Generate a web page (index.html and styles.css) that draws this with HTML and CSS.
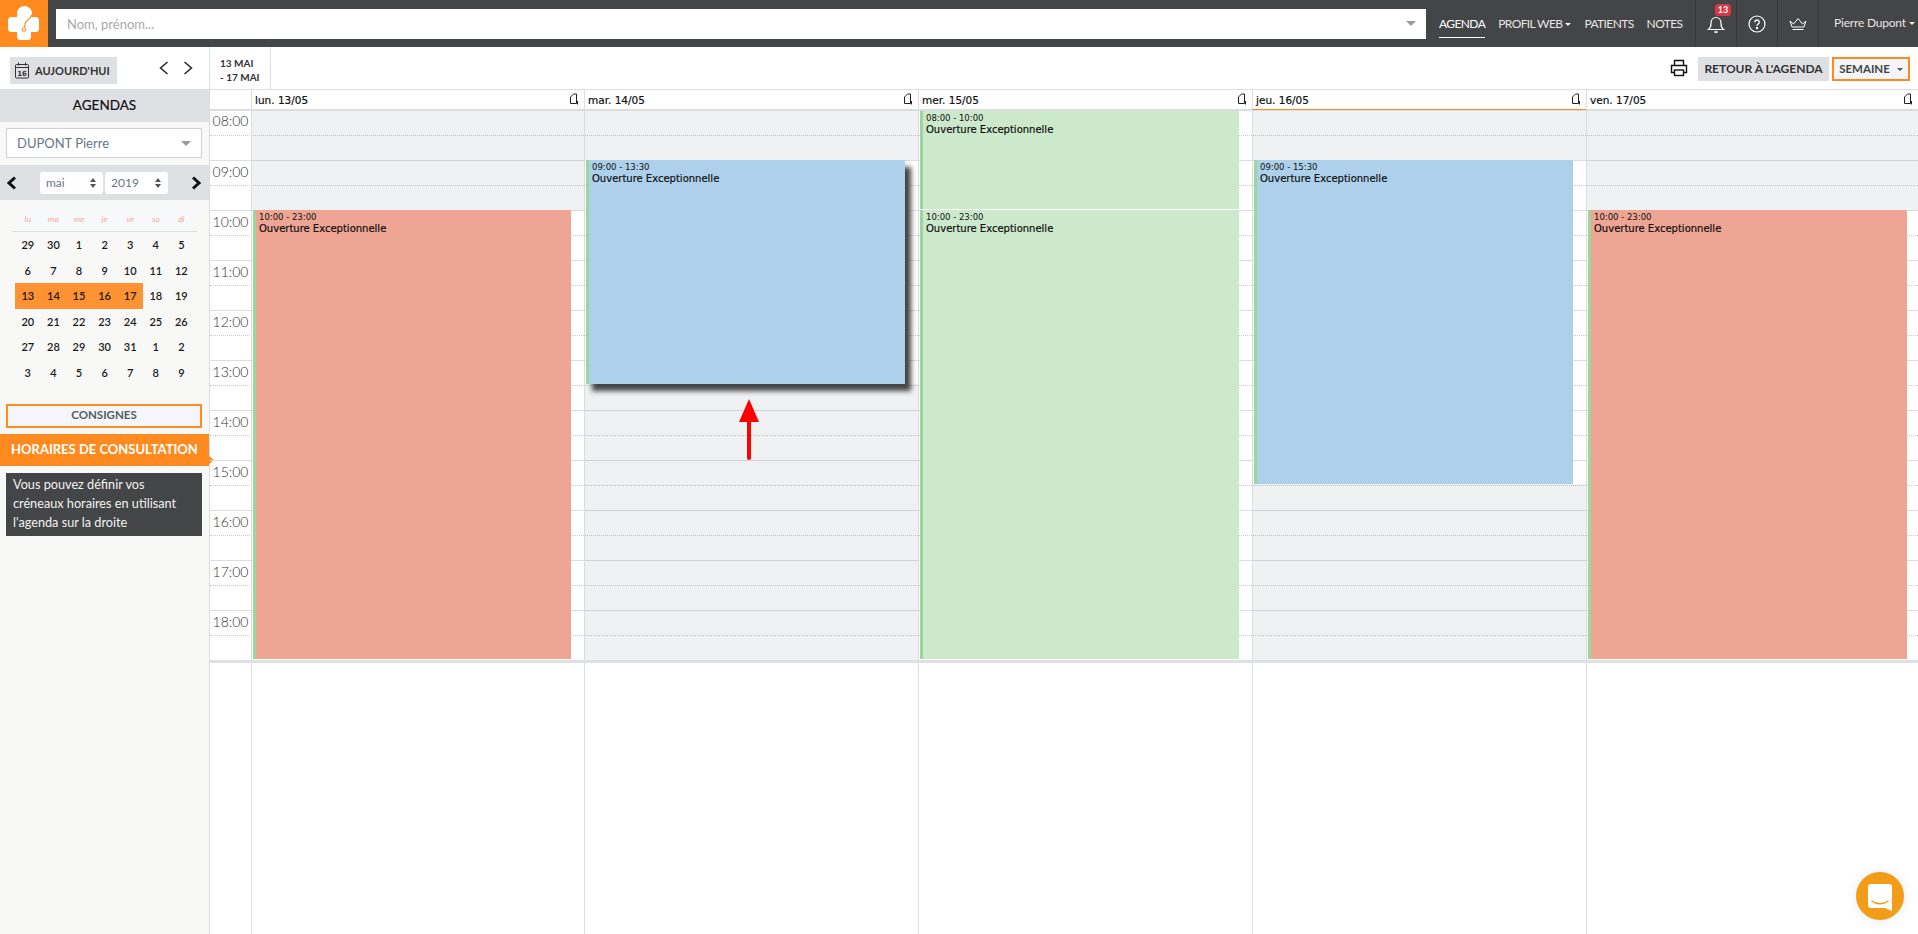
FILE: index.html
```html
<!DOCTYPE html>
<html lang="fr">
<head>
    <meta charset="UTF-8">
    <meta name="viewport" content="width=device-width, initial-scale=1.0">
    <title>Agenda</title>
    <link rel="stylesheet" href="styles.css">
</head>
<body>
    <header class="topbar">
        <a class="logo">
            <svg width="48" height="47" viewBox="0 0 48 47">
                <g fill="#fff">
                    <circle cx="24.500" cy="13.500" r="7.500"/>
                    <rect x="8" y="17" width="31" height="15" rx="3.500"/>
                    <rect x="17" y="13" width="14" height="27" rx="3"/>
                </g>
                <path fill="none" stroke="#ff8a1f" stroke-width="1.200" d="M31.500 15c0 3 -3 4 -5 6c-2 2 -2 4 -2 6.500"/>
                <circle cx="24" cy="29.500" r="1.700" fill="none" stroke="#ff8a1f" stroke-width="1.100"/>
            </svg>
        </a>
        <div class="search">
            <span>Nom, prénom...</span>
            <i class="caret caret-grey"></i>
        </div>
        <nav class="nav">
            <a class="active">AGENDA</a>
            <a>PROFIL WEB<i class="caret"></i></a>
            <a>PATIENTS</a>
            <a>NOTES</a>
        </nav>
        <div class="top-icon">
            <svg width="20" height="20" viewBox="0 0 20 20" fill="none" stroke="#fff" stroke-width="1.200">
                <path d="M2.500 15.500c2 -1.500 2.500 -3 2.500 -6c0 -3.500 2 -6 5 -6s5 2.500 5 6c0 3 .5 4.500 2.500 6z"/>
                <path d="M8.500 17.500a1.800 1.800 0 0 0 3 0" stroke-width="1.600"/>
            </svg>
            <span class="badge">13</span>
        </div>
        <div class="top-icon">
            <svg width="18" height="18" viewBox="0 0 18 18" fill="none" stroke="#fff" stroke-width="1.200">
                <circle cx="9" cy="9" r="8"/>
                <path d="M6.800 7.200a2.200 2.200 0 1 1 3.400 1.800c-.8 .5 -1.200 1 -1.200 1.800" stroke-width="1.400"/>
                <circle cx="9" cy="13" r=".6" fill="#fff"/>
            </svg>
        </div>
        <div class="top-icon">
            <svg width="18" height="14" viewBox="0 0 18 14" fill="none" stroke="#fff" stroke-width="1">
                <path d="M1 4l3.500 3l4.500 -5.500l4.500 5.500l3.500 -3l-2 6h-12z"/>
                <path d="M3.500 12.500h11"/>
            </svg>
        </div>
        <a class="user">Pierre Dupont<i class="caret"></i></a>
    </header>

    <div class="main">
        <aside class="sidebar">
            <div class="side-tools">
                <button class="today">
                    <svg width="14" height="17" viewBox="0 0 14 17" fill="none" stroke="#333" stroke-width="1">
                        <rect x=".5" y="2.500" width="13" height="13.500" rx="1"/>
                        <path d="M.5 5.500h13M3.500 .5v3M10.500 .5v3"/>
                        <text x="7" y="13.800" class="today-num">16</text>
                    </svg>
                    AUJOURD'HUI
                </button>
                <div class="side-arrows">
                    <svg width="10" height="14" viewBox="0 0 10 14" fill="none" stroke="#222" stroke-width="1.500"><path d="M8.500 1L1.500 7l7 6"/></svg>
                    <svg width="10" height="14" viewBox="0 0 10 14" fill="none" stroke="#222" stroke-width="1.500"><path d="M1.500 1l7 6l-7 6"/></svg>
                </div>
            </div>
            <h3 class="agendas">AGENDAS</h3>
            <div class="agenda-select">
                <span>DUPONT Pierre</span>
                <i class="caret caret-grey"></i>
            </div>
            <div class="month-bar">
                <svg width="11" height="14" viewBox="0 0 11 14" fill="none" stroke="#111" stroke-width="3"><path d="M9 1.500L3 7l6 5.500"/></svg>
                <div class="month-selects">
                    <div class="mini-select">mai<i class="updown"></i></div>
                    <div class="mini-select">2019<i class="updown"></i></div>
                </div>
                <svg width="11" height="14" viewBox="0 0 11 14" fill="none" stroke="#111" stroke-width="3"><path d="M2 1.500L8 7l-6 5.500"/></svg>
            </div>
            <div class="cal">
                <div class="cal-head">
                    <span>lu</span><span>ma</span><span>me</span><span>je</span><span>ve</span><span>sa</span><span>di</span>
                </div>
                <div class="cal-body">
                    <span>29</span><span>30</span><span>1</span><span>2</span><span>3</span><span>4</span><span>5</span>
                    <span>6</span><span>7</span><span>8</span><span>9</span><span>10</span><span>11</span><span>12</span>
                    <span class="sel">13</span><span class="sel">14</span><span class="sel">15</span><span class="sel">16</span><span class="sel">17</span><span>18</span><span>19</span>
                    <span>20</span><span>21</span><span>22</span><span>23</span><span>24</span><span>25</span><span>26</span>
                    <span>27</span><span>28</span><span>29</span><span>30</span><span>31</span><span>1</span><span>2</span>
                    <span>3</span><span>4</span><span>5</span><span>6</span><span>7</span><span>8</span><span>9</span>
                </div>
            </div>
            <button class="consignes">CONSIGNES</button>
            <div class="horaires">HORAIRES DE CONSULTATION</div>
            <p class="hint">Vous pouvez définir vos créneaux horaires en utilisant l'agenda sur la droite</p>
        </aside>

        <section class="content">
            <div class="toolbar">
                <div class="range">13 MAI<br>- 17 MAI</div>
                <div class="tool-right">
                    <svg width="18" height="18" viewBox="0 0 18 18" fill="none" stroke="#111" stroke-width="1.400">
                        <path d="M4.500 6V1.500h9V6M4.500 13.500H1.500V6.500h15v7h-3"/>
                        <rect x="4.500" y="11" width="9" height="5.500"/>
                    </svg>
                    <button class="btn-grey">RETOUR À L'AGENDA</button>
                    <button class="btn-week">SEMAINE<i class="caret caret-dark"></i></button>
                </div>
            </div>

            <div class="days-head">
                <div class="time-gap"></div>
                <div class="day-name">lun. 13/05<svg class="note" width="10" height="12" viewBox="0 0 10 12" fill="none" stroke="#222"><path d="M1.500 10.500V4l3 -3h3v9.500zM8.500 8v3.500"/></svg></div>
                <div class="day-name">mar. 14/05<svg class="note" width="10" height="12" viewBox="0 0 10 12" fill="none" stroke="#222"><path d="M1.500 10.500V4l3 -3h3v9.500zM8.500 8v3.500"/></svg></div>
                <div class="day-name">mer. 15/05<svg class="note" width="10" height="12" viewBox="0 0 10 12" fill="none" stroke="#222"><path d="M1.500 10.500V4l3 -3h3v9.500zM8.500 8v3.500"/></svg></div>
                <div class="day-name today-col">jeu. 16/05<svg class="note" width="10" height="12" viewBox="0 0 10 12" fill="none" stroke="#222"><path d="M1.500 10.500V4l3 -3h3v9.500zM8.500 8v3.500"/></svg></div>
                <div class="day-name">ven. 17/05<svg class="note" width="10" height="12" viewBox="0 0 10 12" fill="none" stroke="#222"><path d="M1.500 10.500V4l3 -3h3v9.500zM8.500 8v3.500"/></svg></div>
            </div>

            <div class="grid">
                <div class="hours">
                    <div class="hour"><span>08:00</span></div>
                    <div class="hour"><span>09:00</span></div>
                    <div class="hour"><span>10:00</span></div>
                    <div class="hour"><span>11:00</span></div>
                    <div class="hour"><span>12:00</span></div>
                    <div class="hour"><span>13:00</span></div>
                    <div class="hour"><span>14:00</span></div>
                    <div class="hour"><span>15:00</span></div>
                    <div class="hour"><span>16:00</span></div>
                    <div class="hour"><span>17:00</span></div>
                    <div class="hour"><span>18:00</span></div>
                </div>
                <div class="cols">
                    <div class="col">
                        <div class="off" style="top:0;height:99px"></div>
                        <div class="event red" style="top:99px;height:449px"><small>10:00 - 23:00</small><b>Ouverture Exceptionnelle</b></div>
                    </div>
                    <div class="col">
                        <div class="off" style="top:0;height:49px"></div>
                        <div class="off" style="top:273px;height:276px"></div>
                        <div class="event blue lifted" style="top:49px;height:224px"><small>09:00 - 13:30</small><b>Ouverture Exceptionnelle</b></div>
                    </div>
                    <div class="col">
                        <div class="event green" style="top:0;height:98px"><small>08:00 - 10:00</small><b>Ouverture Exceptionnelle</b></div>
                        <div class="event green" style="top:99px;height:449px"><small>10:00 - 23:00</small><b>Ouverture Exceptionnelle</b></div>
                    </div>
                    <div class="col">
                        <div class="off" style="top:0;height:49px"></div>
                        <div class="off" style="top:373px;height:176px"></div>
                        <div class="event blue" style="top:49px;height:324px"><small>09:00 - 15:30</small><b>Ouverture Exceptionnelle</b></div>
                    </div>
                    <div class="col">
                        <div class="off" style="top:0;height:99px"></div>
                        <div class="event red" style="top:99px;height:449px"><small>10:00 - 23:00</small><b>Ouverture Exceptionnelle</b></div>
                    </div>
                </div>
                <svg class="arrow" width="24" height="62" viewBox="0 0 24 62">
                    <path fill="#f00" d="M12 0l10 23h-8v36a2 2 0 0 1 -4 0V23H2z"/>
                </svg>
            </div>

            <div class="below">
                <div class="time-gap"></div>
                <div class="below-col"></div>
                <div class="below-col"></div>
                <div class="below-col"></div>
                <div class="below-col"></div>
                <div class="below-col"></div>
            </div>
        </section>
    </div>

    <a class="chat">
        <svg width="24" height="27" viewBox="0 0 24 27">
            <path fill="#fff" d="M3 0h18a3 3 0 0 1 3 3v24l-7 -3H3a3 3 0 0 1 -3 -3V3a3 3 0 0 1 3 -3z"/>
            <path fill="none" stroke="#f29c17" stroke-width="1.500" d="M3.500 17c5 3.500 12 3.500 17 0"/>
        </svg>
    </a>
</body>
</html>
```

FILE: styles.css
```css
* {
    box-sizing: border-box;
}
html, body {
    height: 100%;
}
body {
    margin: 0;
    font-family: Lato, "Noto Sans", sans-serif;
    color: #222;
    background: #fff;
    display: flex;
    flex-direction: column;
    overflow: hidden;
}
button {
    font-family: inherit;
    border: none;
    cursor: pointer;
}
p, h3 {
    margin: 0;
}
.caret {
    display: inline-block;
    width: 0;
    height: 0;
    margin-left: 3px;
    vertical-align: 2px;
    border-left: 3px solid transparent;
    border-right: 3px solid transparent;
    border-top: 3px solid #eee;
}
.caret-grey {
    border-top-color: #999;
    border-left-width: 5px;
    border-right-width: 5px;
    border-top-width: 5px;
}
.caret-dark {
    border-top-color: #555;
    margin-left: 7px;
}

/* top bar */
.topbar {
    height: 47px;
    flex: none;
    display: flex;
    align-items: center;
    background: #444547;
    color: #e6e6e6;
}
.logo {
    width: 48px;
    height: 47px;
    background: #ff8a1f;
    flex: none;
}
.logo svg {
    display: block;
}
.search {
    width: 1370px;
    height: 30px;
    flex: none;
    margin-left: 8px;
    padding: 0 10px 0 11px;
    background: #fff;
    display: flex;
    align-items: center;
    justify-content: space-between;
    color: #a9a9a9;
    font-size: 13px;
}
.nav {
    display: flex;
    gap: 13px;
    flex: none;
    margin-left: 13px;
    width: 256px;
    font-size: 12px;
    letter-spacing: -.6px;
}
.nav a {
    padding: 6px 0;
    white-space: nowrap;
}
.nav a.active {
    color: #fff;
    border-bottom: 1px solid #fff;
}
.top-icon {
    width: 41px;
    height: 47px;
    flex: none;
    border-left: 1px solid #36373a;
    display: flex;
    align-items: center;
    justify-content: center;
    position: relative;
}
.badge {
    position: absolute;
    top: 4px;
    left: 19px;
    width: 16px;
    height: 12px;
    background: #dc3545;
    color: #fff;
    font-size: 9px;
    font-weight: 700;
    line-height: 12px;
    text-align: center;
    border-radius: 3px;
}
.user {
    flex: 1;
    height: 47px;
    border-left: 1px solid #36373a;
    padding-left: 15px;
    line-height: 45px;
    font-size: 12px;
    letter-spacing: -.2px;
    white-space: nowrap;
}

/* main */
.main {
    flex: 1;
    display: flex;
    min-height: 0;
}
.sidebar {
    width: 210px;
    flex: none;
    background: #f8f8f6;
    border-right: 1px solid #dcdddf;
}
.side-tools {
    height: 42px;
    background: #fff;
    padding: 10px 16px 0 10px;
    display: flex;
    justify-content: space-between;
}
.today {
    width: 107px;
    height: 27px;
    padding: 0 0 0 5px;
    background: #dee0e4;
    color: #333;
    font-size: 11px;
    font-weight: 700;
    display: flex;
    align-items: center;
    gap: 6px;
    white-space: nowrap;
}
.today-num {
    font-size: 7px;
    font-family: "DejaVu Sans", sans-serif;
    text-anchor: middle;
    fill: #333;
    stroke: none;
}
.side-arrows {
    display: flex;
    gap: 14px;
    padding-top: 4px;
    height: 20px;
}
.agendas {
    height: 33px;
    line-height: 33px;
    text-align: center;
    background: #dee0e4;
    font-size: 13.500px;
    font-weight: 400;
    color: #111;
    -webkit-text-stroke: .2px #111;
}
.agenda-select {
    height: 30px;
    margin: 6px 7px 7px 6px;
    padding: 0 10px;
    background: #fff;
    border: 1px solid #cfd3d9;
    color: #6d7583;
    font-size: 13px;
    display: flex;
    align-items: center;
    justify-content: space-between;
}
.month-bar {
    height: 35px;
    background: #dee0e4;
    padding: 0 7px 0 6px;
    display: flex;
    align-items: center;
    justify-content: space-between;
}
.month-selects {
    display: flex;
    gap: 2px;
}
.mini-select {
    width: 63px;
    height: 22px;
    padding: 0 7px 0 6px;
    background: #fff;
    border-radius: 3px;
    color: #6d7583;
    font-size: 12px;
    line-height: 22px;
    position: relative;
}
.updown::before,
.updown::after {
    content: "";
    position: absolute;
    right: 7px;
    border-left: 3px solid transparent;
    border-right: 3px solid transparent;
}
.updown::before {
    top: 6px;
    border-bottom: 4px solid #555;
}
.updown::after {
    top: 12px;
    border-top: 4px solid #555;
}
.cal {
    margin: 10px 12px 0;
    height: 193px;
}
.cal-head {
    display: grid;
    grid-template-columns: repeat(7, 25.600px);
    height: 22px;
    padding: 0 3px;
    background: #f7f8fa;
    border-bottom: 1px solid #dcdee1;
    font-size: 8.500px;
    font-style: italic;
    color: #f4aaa0;
    text-align: center;
    line-height: 18px;
}
.cal-body {
    display: grid;
    grid-template-columns: repeat(7, 25.600px);
    grid-auto-rows: 25.600px;
    padding: 0 3px;
    font-size: 11px;
    font-weight: 600;
    color: #1a1a1a;
    text-align: center;
    line-height: 25px;
}
.cal-body .sel {
    background: #ff9233;
}
.consignes {
    display: block;
    width: 196px;
    height: 24px;
    margin: 1px 0 0 6px;
    padding: 0 0 3px;
    background: #f4f6f9;
    border: 2px solid #ff8a1f;
    color: #555c68;
    font-size: 11.500px;
    font-weight: 700;
}
.horaires {
    position: relative;
    height: 32px;
    margin-top: 6px;
    background: #ff8a1f;
    color: #fff;
    font-size: 13px;
    font-weight: 700;
    line-height: 30px;
    padding-left: 11px;
    white-space: nowrap;
}
.horaires::after {
    content: "";
    position: absolute;
    left: 100%;
    bottom: 2px;
    border-left: 5px solid #ff8a1f;
    border-top: 4px solid transparent;
    border-bottom: 4px solid transparent;
}
.hint {
    width: 196px;
    height: 63px;
    margin: 7px 0 0 6px;
    padding: 2px 7px;
    background: #444547;
    color: #f2f2f2;
    font-size: 12.700px;
    line-height: 19px;
}

/* agenda */
.content {
    flex: 1;
    min-width: 0;
    display: flex;
    flex-direction: column;
}
.toolbar {
    height: 43px;
    flex: none;
    display: flex;
    justify-content: space-between;
    border-bottom: 1px solid #dcdddf;
}
.range {
    width: 61px;
    padding: 9px 0 0 10px;
    border-right: 1px solid #dcdddf;
    font-size: 10px;
    line-height: 14px;
    font-weight: 700;
    color: #333;
}
.tool-right {
    display: flex;
    align-items: flex-start;
    padding: 10px 8px 0 0;
}
.tool-right svg {
    margin: 2px 10px 0 0;
}
.btn-grey {
    width: 131px;
    height: 24px;
    padding: 0 0 2px;
    background: #dee0e4;
    color: #333;
    font-size: 12px;
    font-weight: 700;
}
.btn-week {
    width: 78px;
    height: 24px;
    margin-left: 3px;
    padding: 0 0 2px;
    background: #f4f5f8;
    border: 2px solid #ff8a1f;
    color: #444;
    font-size: 11.500px;
    font-weight: 700;
}
.days-head {
    height: 21px;
    flex: none;
    display: flex;
    border-bottom: 2px solid #dcdddf;
}
.time-gap {
    width: 41px;
    flex: none;
}
.day-name,
.col,
.below-col {
    flex: 0 0 334px;
    border-left: 1px solid #dcdddf;
}
.day-name:nth-child(2),
.col:first-child,
.below-col:nth-child(2) {
    flex-basis: 333px;
}
.day-name:last-child,
.col:last-child,
.below-col:last-child {
    flex: 1;
}
.day-name {
    position: relative;
    padding-left: 3px;
    font-family: "DejaVu Sans", sans-serif;
    font-size: 10.500px;
    line-height: 20px;
    color: #111;
    -webkit-text-stroke: .2px #111;
}
.day-name.today-col {
    border-bottom: 1px solid #ff8a1f;
    height: 20px;
}
.note {
    position: absolute;
    right: 5px;
    top: 3px;
}
.grid {
    position: relative;
    flex: none;
    height: 549px;
}
.hour {
    height: 50px;
    border-top: 1px solid #dcdddf;
    position: relative;
    font-size: 14px;
    font-weight: 300;
    color: #333;
}
.hour:first-child {
    height: 49px;
    border-top: none;
}
.hour span {
    display: block;
    width: 41px;
    text-align: center;
    line-height: 20px;
    padding-top: 1px;
}
.hour:first-child span {
    padding-top: 0;
}
.hour::after {
    content: "";
    position: absolute;
    left: 0;
    right: 0;
    top: 24px;
    border-top: 1px dotted #ccc;
}
.cols {
    position: absolute;
    top: 0;
    bottom: 0;
    left: 41px;
    right: 0;
    display: flex;
}
.col {
    position: relative;
}
.off {
    position: absolute;
    left: 0;
    right: 0;
    background: rgba(5, 22, 55, .06);
}
.event {
    position: absolute;
    left: 1px;
    width: 319px;
    padding: 0 0 0 3px;
    border-left: 3px solid #9dd69c;
    font-family: "DejaVu Sans", sans-serif;
    color: #111;
    white-space: nowrap;
}
.col:first-child .event {
    width: 318px;
}
.event small {
    display: block;
    font-size: 8.500px;
    line-height: 10px;
    padding-top: 2px;
}
.event b {
    display: block;
    font-size: 10px;
    font-weight: 400;
    line-height: 13px;
    -webkit-text-stroke: .2px #111;
}
.red {
    background: #eea593;
}
.blue {
    background: #aed1eb;
}
.green {
    background: #cde9cb;
}
.lifted {
    box-shadow: 6px 7px 5px #444;
    z-index: 2;
}
.arrow {
    position: absolute;
    top: 288px;
    left: 527px;
    z-index: 3;
}
.below {
    flex: 1;
    display: flex;
    border-top: 3px solid #dfe0e3;
}
.chat {
    position: absolute;
    left: 1856px;
    top: 872px;
    width: 48px;
    height: 48px;
    border-radius: 50%;
    background: #f29c17;
    box-shadow: 0 1px 12px rgba(0, 0, 0, .08);
    display: flex;
    align-items: center;
    justify-content: center;
    padding-top: 2px;
}
```
